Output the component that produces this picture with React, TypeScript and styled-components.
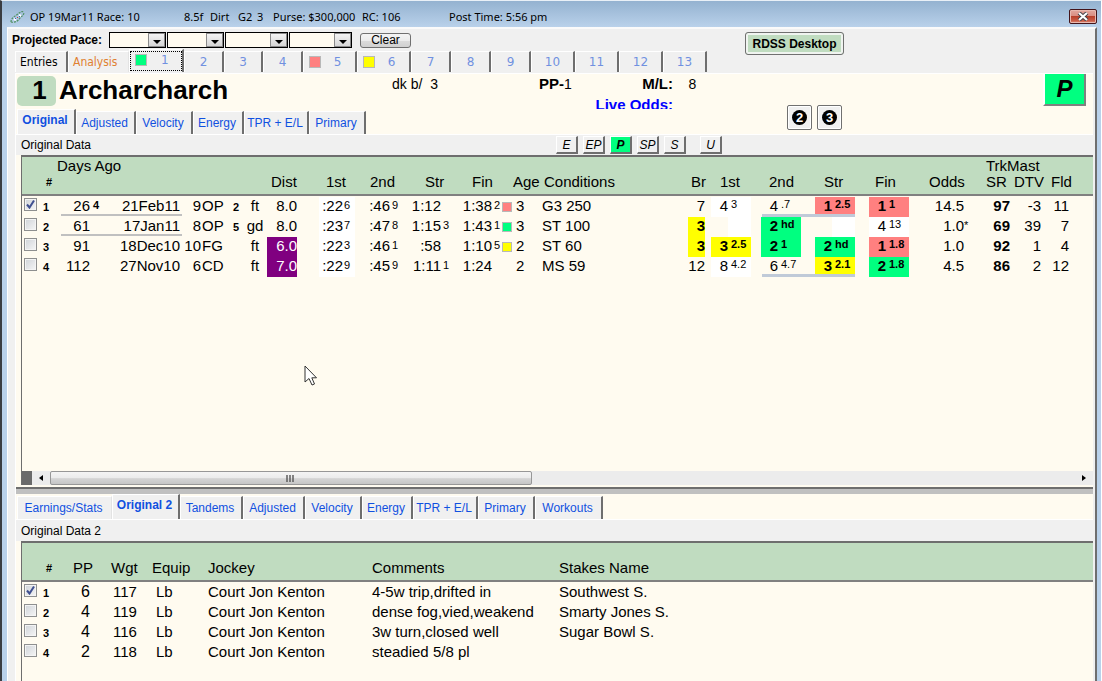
import React from 'react';
import styled, { createGlobalStyle, css } from 'styled-components';

const GREEN = '#00ff80';
const SALMON = '#ff8080';
const YELLOW = '#ffff00';
const PURPLE = '#800080';
const MINT = '#c0dcc0';
const CREAM = '#fffbf0';
const FACE = '#f0f0f0';
const SANS = '"Liberation Sans", Arial, sans-serif';

const Global = createGlobalStyle`
  *, *::before, *::after { box-sizing: border-box; }
  html, body { margin: 0; padding: 0; }
  body { font-family: ${SANS}; font-size: 12px; color: #000; background: #b9d1ea; overflow: hidden; }
  button, select, input { font: inherit; color: inherit; margin: 0; padding: 0; border-radius: 0; }
  h1, p { margin: 0; }
`;

/* ---------- window frame ---------- */

const Frame = styled.div`
  position: relative;
  display: flex;
  flex-direction: column;
  min-height: 100vh;
  background: #b9d1ea;
  border-left: 2px solid #3a3d42;
  border-right: 1px solid #fff;
  border-top: 1px solid #e9f0f7;
`;

const TitleBar = styled.header`
  display: flex;
  align-items: center;
  height: 26px;
  padding: 5px 4px 0 8px;
  background: linear-gradient(#94b2d0, #b9d1ea);
  font: 11px/16px 'Noto Sans', 'Open Sans', sans-serif;
  white-space: pre;
`;

const TitleText = styled.span<{ $w: number }>`
  width: ${(p) => p.$w}px;
  flex: none;
`;

const CloseButton = styled.button`
  display: flex;
  align-items: center;
  justify-content: center;
  width: 28px;
  height: 15px;
  margin-left: auto;
  border: 1px solid #43141a;
  border-radius: 2px;
  background: linear-gradient(#e3a89f 0, #d98d82 45%, #b9402b 50%, #c75a45 80%, #e08b76 100%);
  box-shadow: inset 0 0 0 1px #e9b9b0;
`;

const Client = styled.main`
  flex: 1;
  display: flex;
  flex-direction: column;
  margin: 0 4px 0 5px;
  padding-left: 7px;
  border-top: 2px solid #fafafa;
  border-left: 1px solid #fff;
  border-right: 2px solid #6e6e6e;
  background: ${FACE};
`;

/* ---------- toolbar and race tabs ---------- */

const TopBar = styled.div`
  display: grid;
  grid-template-columns: 730px 1fr;
  height: 44px;
`;

const PaceRow = styled.div`
  display: flex;
  align-items: center;
  height: 20px;
  padding-top: 2px;
  gap: 1px;
`;

const PaceLabel = styled.span`
  width: 96px;
  margin-left: -3px;
  font-weight: bold;
  white-space: nowrap;
`;

const SelectBox = styled.span<{ $w: number }>`
  display: flex;
  width: ${(p) => p.$w}px;
  height: 16px;
  border: 1px solid #000;
  background: ${CREAM};
`;

const Select = styled.select`
  flex: 1;
  min-width: 0;
  border: 0;
  appearance: none;
  background: ${CREAM};
`;

const Arrow = styled.span`
  display: flex;
  align-items: flex-end;
  justify-content: center;
  width: 17px;
  padding-bottom: 2px;
  border: 1px solid #8a8a8a;
  background: linear-gradient(#f4f4f4, #d6d6d6);
`;

const ClearButton = styled.button`
  width: 51px;
  height: 15px;
  margin-left: 7px;
  border: 1px solid #707070;
  border-radius: 3px;
  background: linear-gradient(#f4f4f4 0, #ececec 50%, #dcdcdc 50%, #d0d0d0 100%);
  line-height: 13px;
`;

const DesktopButton = styled.button`
  justify-self: start;
  width: 99px;
  height: 23px;
  margin-top: 3px;
  border: 1px solid #707070;
  border-radius: 3px;
  background: ${MINT};
  box-shadow: inset 0 0 0 2px #f0f4f0;
  font-weight: bold;
`;

const RaceTabs = styled.div`
  display: flex;
  align-items: flex-end;
  height: 24px;
  padding: 0 0 1px 0;
`;

const tabBase = css`
  flex: none;
  border: 0;
  border-top: 1px solid #fff;
  border-left: 1px solid #fff;
  background: ${FACE};
  white-space: nowrap;
`;

const RaceTab = styled.button<{ $w: number; $active?: boolean; $edge?: boolean; $marked?: boolean; $color: string }>`
  ${tabBase}
  display: flex;
  align-items: center;
  justify-content: center;
  gap: 13px;
  width: ${(p) => p.$w}px;
  height: ${(p) => (p.$active ? 23 : 21)}px;
  padding-right: ${(p) => (p.$marked ? 9 : 0)}px;
  border-right: ${(p) => (p.$edge === false ? '1px solid #e3e3e3' : '2px solid #6e6e6e')};
  color: ${(p) => p.$color};
  font: 12px/16px 'DejaVu Sans', Verdana, sans-serif;
`;

const WordTab = styled(RaceTab)`
  justify-content: flex-start;
  padding-left: 4px;
  font: 12px/16px 'DejaVu Sans Condensed', 'DejaVu Sans', sans-serif;
`;

const FocusRing = styled.span`
  display: flex;
  align-items: center;
  gap: 14px;
  width: 52px;
  height: 20px;
  padding: 0 0 3px 4px;
  border: 1px dotted #000;
`;

const Swatch = styled.span<{ $color: string; $size: number }>`
  flex: none;
  width: ${(p) => p.$size}px;
  height: ${(p) => p.$size}px;
  border: 1px solid #b8b8b8;
  background: ${(p) => p.$color};
`;

/* ---------- horse header ---------- */

const Sheet = styled.section`
  flex: 1;
  display: flex;
  flex-direction: column;
  margin-right: 2px;
  border-top: 1px solid #fff;
  border-left: 1px solid #fff;
  background: ${CREAM};
`;

const HorseArea = styled.div`
  display: grid;
  grid-template-columns: 771px 1fr auto;
`;

const HorseLine = styled.div`
  display: flex;
  height: 35px;
  padding: 2px 0 0 1px;
  overflow: hidden;
`;

const PostBadge = styled.span`
  width: 39px;
  height: 30px;
  border-radius: 5px;
  background: ${MINT};
  font: bold 26px/28px ${SANS};
  text-align: center;
  padding-left: 6px;
`;

const HorseName = styled.h1`
  width: 336px;
  padding-left: 3px;
  font: bold 26px/28px ${SANS};
`;

const Facts = styled.div`
  display: grid;
  grid-template-columns: 147px 60px 74px 24px;
  grid-auto-rows: 20px;
  font-size: 14px;
  line-height: 16px;
  white-space: pre;
`;

const FactLabel = styled.span`
  font-weight: bold;
  font-size: 15px;
`;

const RightLabel = styled(FactLabel)`
  text-align: right;
`;

const LiveOdds = styled(RightLabel)`
  grid-column: 2 / 4;
  color: #0000ff;
  line-height: 18px;
`;

const RoundButtons = styled.div`
  display: flex;
  gap: 5px;
  padding-top: 31px;
`;

const RoundButton = styled.button`
  display: flex;
  align-items: center;
  justify-content: center;
  width: 25px;
  height: 25px;
  border: 1px solid #707070;
  border-radius: 2px;
  background: ${FACE};
  box-shadow: inset 0 0 0 1px #fff;
`;

const RunStyle = styled.button`
  width: 43px;
  height: 32px;
  margin-right: 7px;
  border: 0;
  border-left: 2px solid #fff;
  border-right: 2px solid #808080;
  border-bottom: 2px solid #808080;
  background: ${GREEN};
  font: italic bold 24px/28px ${SANS};
`;

/* ---------- section tabs ---------- */

const SectionTabs = styled.div`
  display: flex;
  align-items: flex-end;
  height: 25px;
  padding-left: 1px;
`;

const SectionTab = styled.button<{ $w: number; $active?: boolean; $edge?: boolean }>`
  ${tabBase}
  width: ${(p) => p.$w}px;
  height: ${(p) => (p.$active ? 25 : 23)}px;
  padding: 0 2px ${(p) => (p.$active ? 4 : 1)}px 0;
  border-right: ${(p) => (p.$edge === false ? '1px solid #e3e3e3' : '2px solid #6e6e6e')};
  color: #1050e0;
  font-weight: ${(p) => (p.$active ? 'bold' : 'normal')};
`;

const Caption = styled.div<{ $h: number }>`
  display: flex;
  align-items: center;
  height: ${(p) => p.$h}px;
  padding-left: 5px;
  border-top: 1px solid #fff;
  background: ${FACE};
`;

const CaptionText = styled.span`
  width: 535px;
`;

const StyleButton = styled.button<{ $on?: boolean; $apart?: boolean }>`
  width: 22px;
  height: 18px;
  margin-right: ${(p) => (p.$apart ? 14 : 5)}px;
  border: 1px solid #fff;
  border-right: 2px solid #6e6e6e;
  border-bottom: 2px solid #6e6e6e;
  background: ${(p) => (p.$on ? GREEN : FACE)};
  font-style: italic;
  font-weight: ${(p) => (p.$on ? 'bold' : 'normal')};
  line-height: 14px;
`;

/* ---------- grids ---------- */

const Panel = styled.div<{ $min: number }>`
  flex: ${(p) => (p.$min ? 'none' : 1)};
  min-height: ${(p) => p.$min}px;
  margin-left: 5px;
  border-top: 2px solid #6e6e6e;
  border-left: 1px solid #6e6e6e;
  overflow: hidden;
`;

const Table = styled.table`
  width: 100%;
  table-layout: fixed;
  border-collapse: separate;
  border-spacing: 0;
  font-size: 15px;
  line-height: 18px;
  white-space: nowrap;

  tbody::before {
    content: '';
    display: block;
    height: 1px;
  }
`;

const HeadRow = styled.tr`
  background: ${MINT};
`;

const Th = styled.th<{ $x?: number; $top?: boolean }>`
  height: 39px;
  padding: 1px 0 4px ${(p) => p.$x ?? 0}px;
  border-bottom: 2px solid #808080;
  font-weight: normal;
  line-height: 16px;
  text-align: left;
  vertical-align: ${(p) => (p.$top ? 'top' : 'bottom')};
`;

const SmallTh = styled(Th)`
  font-size: 11px;
  font-weight: bold;
`;

const Td = styled.td<{ $x?: number; $r?: number; $bold?: boolean; $bg?: string; $color?: string; $center?: boolean; $right?: boolean }>`
  height: 20px;
  padding: 0 ${(p) => p.$r ?? 0}px 0 ${(p) => p.$x ?? 0}px;
  text-align: ${(p) => (p.$right ? 'right' : p.$center ? 'center' : 'left')};
  vertical-align: top;
  font-weight: ${(p) => (p.$bold ? 'bold' : 'normal')};
  background: ${(p) => p.$bg ?? 'none'};
  color: ${(p) => p.$color ?? 'inherit'};
`;

const IndexTd = styled(Td)`
  font-size: 11px;
  font-weight: bold;
  line-height: 20px;
`;

const PostTd = styled(Td)`
  font-size: 16px;
`;

const Check = styled.input`
  display: block;
  appearance: none;
  width: 13px;
  height: 13px;
  margin: 1px 0 0 2px;
  border: 1px solid #8e8f8f;
  background: linear-gradient(135deg, #cfd3d8, #f6f6f6);
  box-shadow: inset 0 0 0 1px #f4f4f4;

  &:checked {
    background: url("data:image/svg+xml,%3Csvg xmlns='http://www.w3.org/2000/svg' viewBox='0 0 11 11'%3E%3Cpath d='M2 5.5 L4.5 8.5 L9 1.5' fill='none' stroke='%23405090' stroke-width='2'/%3E%3C/svg%3E") center / 11px 11px no-repeat, linear-gradient(135deg, #cfd3d8, #f6f6f6);
  }
`;

const Pair = styled.div<{ $w: number; $bg?: string }>`
  display: flex;
  justify-content: flex-end;
  width: ${(p) => p.$w}px;
  height: 20px;
  margin-left: auto;
  background: ${(p) => p.$bg ?? 'none'};
`;

const Sup = styled.span<{ $w: number; $gap?: number; $bold?: boolean }>`
  flex: none;
  width: ${(p) => p.$w}px;
  padding-left: ${(p) => p.$gap ?? 0}px;
  font-size: 11px;
  line-height: 17px;
  text-align: left;
  font-weight: ${(p) => (p.$bold ? 'bold' : 'inherit')};
`;

const Call = styled.div<{ $bg?: string; $bold?: boolean; $short?: boolean }>`
  display: flex;
  gap: 3px;
  width: 40px;
  height: ${(p) => (p.$short ? 17 : 20)}px;
  margin-left: auto;
  background: ${(p) => p.$bg ?? 'none'};
  font-weight: ${(p) => (p.$bold ? 'bold' : 'normal')};
`;

const CallPos = styled.span`
  width: 17px;
  text-align: right;
`;

const CallLen = styled.span`
  font-size: 11px;
  line-height: 15px;
`;

const FinSwatch = styled.span`
  display: flex;
  align-items: center;
  width: 10px;
  height: 20px;
`;

/* ---------- scroll bar ---------- */

const ScrollRow = styled.div`
  display: flex;
  height: 14px;
  margin: 0 0 2px 5px;
  border-left: 1px solid #6e6e6e;
  background: #ececec;
`;

const ScrollBlock = styled.span`
  width: 10px;
  background: #6a6a6a;
`;

const ScrollArrow = styled.button`
  display: flex;
  align-items: center;
  justify-content: center;
  width: 18px;
  border: 0;
  background: none;
`;

const Thumb = styled.span`
  display: flex;
  align-items: center;
  justify-content: center;
  width: 45%;
  border: 1px solid #979797;
  border-radius: 2px;
  background: linear-gradient(#f4f4f4 0, #ebebeb 50%, #d4d4d4 55%, #c6c6c6 100%);
`;

const ScrollRest = styled.span`
  flex: 1;
`;

const Splitter = styled.div`
  height: 7px;
  border-top: 2px solid #6e6e6e;
  background: #c0c0c0;
`;

const Pointer = styled.svg`
  position: absolute;
  left: 302px;
  top: 364px;
`;

/* ---------- data ---------- */

const BLUE = '#7090e0';

const raceTabs: [string, number, string?][] = [
  ['2', 40], ['3', 39], ['4', 40], ['5', 54, SALMON], ['6', 54, YELLOW], ['7', 40],
  ['8', 40], ['9', 40], ['10', 44], ['11', 44], ['12', 44], ['13', 44],
];

const upperTabs: [string, number][] = [
  ['Original', 59], ['Adjusted', 60], ['Velocity', 57], ['Energy', 51], ['TPR + E/L', 65], ['Primary', 57],
];

const lowerTabs: [string, number][] = [
  ['Earnings/Stats', 95], ['Original 2', 68], ['Tandems', 63], ['Adjusted', 62], ['Velocity', 57],
  ['Energy', 51], ['TPR + E/L', 65], ['Primary', 57], ['Workouts', 68],
];

type CallData = { p?: string; l?: string; c?: string };
type Row = {
  days: string; daysSup?: string; date: string; race: string; track: string; post?: string; cond: string;
  dist: string; purple?: boolean; t: [string, string][]; mark?: string; age: string; conditions: string;
  br: string; brHot?: boolean; calls: CallData[]; odds: string; star?: boolean; sr: string; dtv: string; fld: string;
};

const rows: Row[] = [
  {
    days: '26', daysSup: '4', date: '21Feb11', race: '9', track: 'OP', post: '2', cond: 'ft', dist: '8.0',
    t: [[':22', '6'], [':46', '9'], ['1:12', ''], ['1:38', '2']], mark: SALMON, age: '3', conditions: 'G3 250', br: '7',
    calls: [{ p: '4', l: '3', c: '#fff' }, { p: '4', l: '.7' }, { p: '1', l: '2.5', c: SALMON }, { p: '1', l: '1', c: SALMON }],
    odds: '14.5', sr: '97', dtv: '-3', fld: '11',
  },
  {
    days: '61', date: '17Jan11', race: '8', track: 'OP', post: '5', cond: 'gd', dist: '8.0',
    t: [[':23', '7'], [':47', '8'], ['1:15', '3'], ['1:43', '1']], mark: GREEN, age: '3', conditions: 'ST 100', br: '3', brHot: true,
    calls: [{ c: 'half' }, { p: '2', l: 'hd', c: GREEN }, { c: 'half' }, { p: '4', l: '13', c: '#fff' }],
    odds: '1.0', star: true, sr: '69', dtv: '39', fld: '7',
  },
  {
    days: '91', date: '18Dec10', race: '10', track: 'FG', cond: 'ft', dist: '6.0', purple: true,
    t: [[':22', '3'], [':46', '1'], [':58', ''], ['1:10', '5']], mark: YELLOW, age: '2', conditions: 'ST 60', br: '3', brHot: true,
    calls: [{ p: '3', l: '2.5', c: YELLOW }, { p: '2', l: '1', c: GREEN }, { p: '2', l: 'hd', c: GREEN }, { p: '1', l: '1.8', c: SALMON }],
    odds: '1.0', sr: '92', dtv: '1', fld: '4',
  },
  {
    days: '112', date: '27Nov10', race: '6', track: 'CD', cond: 'ft', dist: '7.0', purple: true,
    t: [[':22', '9'], [':45', '9'], ['1:11', '1'], ['1:24', '']], age: '2', conditions: 'MS 59', br: '12',
    calls: [{ p: '8', l: '4.2', c: '#fff' }, { p: '6', l: '4.7' }, { p: '3', l: '2.1', c: YELLOW }, { p: '2', l: '1.8', c: GREEN }],
    odds: '4.5', sr: '86', dtv: '2', fld: '12',
  },
];

const upperCols = [19, 16, 45, 80, 20, 30, 11, 24, 30, 58, 47, 48, 62, 30, 146, 17, 46, 50, 54, 54, 66, 35, 31, 28];
const lowerCols = [19, 16, 48, 45, 55, 164, 187];

const trips = [
  ['6', '117', 'Lb', 'Court Jon Kenton', '4-5w trip,drifted in', 'Southwest S.'],
  ['4', '119', 'Lb', 'Court Jon Kenton', 'dense fog,vied,weakend', 'Smarty Jones S.'],
  ['4', '116', 'Lb', 'Court Jon Kenton', '3w turn,closed well', 'Sugar Bowl S.'],
  ['2', '118', 'Lb', 'Court Jon Kenton', 'steadied 5/8 pl', ''],
];

const strip = (color: string, w: string, y: string, h: string) =>
  `linear-gradient(${color}, ${color}) right ${y} / ${w} ${h} no-repeat`;

const isColored = (c?: string) => !!c && c !== '#fff' && c !== 'half';

function Cols({ widths }: { widths: number[] }) {
  return (
    <colgroup>
      {widths.map((w, i) => <col key={i} width={w} />)}
      <col />
    </colgroup>
  );
}

function CallCell({ call, bar }: { call: CallData; bar?: string }) {
  const half = call.c === 'half';
  const bg = bar ? strip('#c0cad8', bar, 'bottom', '3px') : half ? strip('#fff', '23px', 'top', '20px') : undefined;
  return (
    <Td $bg={bg}>
      <Call $bg={half ? undefined : call.c} $bold={isColored(call.c)} $short={!!bar}>
        <CallPos>{call.p}</CallPos>
        <CallLen>{call.l}</CallLen>
      </Call>
    </Td>
  );
}

function UpperTable() {
  return (
    <Table aria-label="Original Data">
      <Cols widths={upperCols} />
      <thead>
        <HeadRow>
          <Th />
          <SmallTh $x={5}>#</SmallTh>
          <Th colSpan={2} $top>Days Ago</Th>
          <Th /><Th /><Th /><Th />
          <Th $x={4}>Dist</Th>
          <Th $x={29}>1st</Th>
          <Th $x={15}>2nd</Th>
          <Th $x={23}>Str</Th>
          <Th $x={22}>Fin</Th>
          <Th $x={1}>Age</Th>
          <Th $x={2}>Conditions</Th>
          <Th $x={3}>Br</Th>
          <Th $x={15}>1st</Th>
          <Th $x={18}>2nd</Th>
          <Th $x={23}>Str</Th>
          <Th $x={20}>Fin</Th>
          <Th $x={20}>Odds</Th>
          <Th $x={11}>TrkMast<br />SR</Th>
          <Th $x={4}>DTV</Th>
          <Th $x={10}>Fld</Th>
          <Th />
        </HeadRow>
      </thead>
      <tbody>
        {rows.map((r, i) => {
          const ruled = i < 2;
          const barred = i === 0 || i === 3;
          return (
            <tr key={i}>
              <Td><Check type="checkbox" defaultChecked={i === 0} aria-label={`Select race ${i + 1}`} /></Td>
              <IndexTd $x={2}>{i + 1}</IndexTd>
              <Td $bg={ruled ? strip('#c0c0c0', '41px', '17px', '2px') : undefined}>
                <Pair $w={45}>{r.days}<Sup $w={12} $gap={3} $bold>{r.daysSup}</Sup></Pair>
              </Td>
              <Td $right $r={2} $bg={ruled ? strip('#c0c0c0', '100%', '17px', '2px') : undefined}>{r.date}</Td>
              <Td $right $r={1}>{r.race}</Td>
              <Td>{r.track}</Td>
              <Td $x={1}><Sup $w={8} $bold>{r.post}</Sup></Td>
              <Td $center>{r.cond}</Td>
              <Td $right $bg={r.purple ? PURPLE : undefined} $color={r.purple ? '#fff' : undefined}>{r.dist}</Td>
              <Td><Pair $w={36} $bg="#fff">{r.t[0][0]}<Sup $w={12} $gap={1}>{r.t[0][1]}</Sup></Pair></Td>
              <Td><Pair $w={47}>{r.t[1][0]}<Sup $w={12} $gap={2}>{r.t[1][1]}</Sup></Pair></Td>
              <Td><Pair $w={48}>{r.t[2][0]}<Sup $w={9} $gap={2}>{r.t[2][1]}</Sup></Pair></Td>
              <Td>
                <Pair $w={62}>
                  {r.t[3][0]}<Sup $w={10} $gap={2}>{r.t[3][1]}</Sup>
                  <FinSwatch>{r.mark && <Swatch $color={r.mark} $size={10} />}</FinSwatch>
                </Pair>
              </Td>
              <Td $x={4}>{r.age}</Td>
              <Td>{r.conditions}</Td>
              <Td $right $bold={r.brHot} $bg={r.brHot ? YELLOW : undefined}>{r.br}</Td>
              <CallCell call={r.calls[0]} />
              <CallCell call={r.calls[1]} bar={barred ? '39px' : undefined} />
              <CallCell call={r.calls[2]} bar={barred ? '100%' : undefined} />
              <CallCell call={r.calls[3]} />
              <Td><Pair $w={66}>{r.odds}<Sup $w={11}>{r.star ? '*' : ''}</Sup></Pair></Td>
              <Td $right $bold>{r.sr}</Td>
              <Td $right>{r.dtv}</Td>
              <Td $right>{r.fld}</Td>
              <Td />
            </tr>
          );
        })}
      </tbody>
    </Table>
  );
}

function LowerTable() {
  return (
    <Table aria-label="Original Data 2">
      <Cols widths={lowerCols} />
      <thead>
        <HeadRow>
          <Th />
          <SmallTh $x={5}>#</SmallTh>
          <Th $x={16}>PP</Th>
          <Th $x={6}>Wgt</Th>
          <Th $x={2}>Equip</Th>
          <Th $x={3}>Jockey</Th>
          <Th $x={3}>Comments</Th>
          <Th $x={3}>Stakes Name</Th>
        </HeadRow>
      </thead>
      <tbody>
        {trips.map((t, i) => (
          <tr key={i}>
            <Td><Check type="checkbox" defaultChecked={i === 0} aria-label={`Select trip ${i + 1}`} /></Td>
            <IndexTd $x={2}>{i + 1}</IndexTd>
            <PostTd $x={24}>{t[0]}</PostTd>
            <Td $x={8}>{t[1]}</Td>
            <Td $x={6}>{t[2]}</Td>
            <Td $x={3}>{t[3]}</Td>
            <Td $x={3}>{t[4]}</Td>
            <Td $x={3}>{t[5]}</Td>
          </tr>
        ))}
      </tbody>
    </Table>
  );
}

function Disc({ n }: { n: string }) {
  return (
    <svg width="17" height="17" viewBox="0 0 17 17" aria-hidden="true">
      <circle cx="8.5" cy="8.5" r="7.5" fill="#000" />
      <text x="8.5" y="13" textAnchor="middle" fill="#fff" fontFamily="Liberation Sans" fontWeight="bold" fontSize="13">{n}</text>
    </svg>
  );
}

export default function App() {
  return (
    <>
      <Global />
      <Frame>
        <TitleBar>
          <svg width="20" height="14" viewBox="0 0 20 14" aria-hidden="true">
            <g fill="none" stroke="#4f9060" strokeWidth="1.2">
              <path d="M1 12 C1 8 5 6 8 4 C10 2 12 1 14 2" strokeDasharray="2 1" />
              <path d="M1 12 C5 13 8 11 10 8 C12 6 14 5 14 2" strokeDasharray="2 1" />
            </g>
            <path d="M4 9 L6 10 M9 5 L11 6" stroke="#fff" strokeWidth="2" />
            <path d="M5 8 L6 9 M9 6 L10 7" stroke="#3b62b8" strokeWidth="1" />
            <path d="M7 7 L8 8" stroke="#c04040" strokeWidth="1" />
          </svg>
          <TitleText $w={154}>OP 19Mar11 Race: 10</TitleText>
          <TitleText $w={26}>8.5f</TitleText>
          <TitleText $w={28}>Dirt</TitleText>
          <TitleText $w={19}>G2</TitleText>
          <TitleText $w={16}>3</TitleText>
          <TitleText $w={89}>Purse: $300,000</TitleText>
          <TitleText $w={87}>RC: 106</TitleText>
          <TitleText $w={120}>Post Time: 5:56 pm</TitleText>
          <CloseButton aria-label="Close">
            <svg width="12" height="9" viewBox="0 0 12 9" aria-hidden="true">
              <path d="M2 1 L10 8 M10 1 L2 8" stroke="#404048" strokeWidth="4" />
              <path d="M2 1 L10 8 M10 1 L2 8" stroke="#fff" strokeWidth="2.2" />
            </svg>
          </CloseButton>
        </TitleBar>
        <Client>
          <TopBar>
            <div>
              <PaceRow>
                <PaceLabel>Projected Pace:</PaceLabel>
                {[57, 57, 63, 63].map((w, i) => (
                  <SelectBox key={i} $w={w}>
                    <Select aria-label={`Projected pace ${i + 1}`}><option /></Select>
                    <Arrow>
                      <svg width="8" height="4" viewBox="0 0 8 4" aria-hidden="true"><path d="M0 0 H8 L4 4 Z" /></svg>
                    </Arrow>
                  </SelectBox>
                ))}
                <ClearButton>Clear</ClearButton>
              </PaceRow>
              <RaceTabs role="tablist">
                <WordTab role="tab" $w={53} $color="#000">Entries</WordTab>
                <WordTab role="tab" $w={61} $edge={false} $color="#e08030">Analysis</WordTab>
                <RaceTab role="tab" aria-selected $w={55} $active $color={BLUE}>
                  <FocusRing><Swatch $color={GREEN} $size={12} />1</FocusRing>
                </RaceTab>
                {raceTabs.map(([n, w, c]) => (
                  <RaceTab role="tab" key={n} $w={w} $marked={!!c} $color={BLUE}>
                    {c && <Swatch $color={c} $size={12} />}{n}
                  </RaceTab>
                ))}
              </RaceTabs>
            </div>
            <DesktopButton>RDSS Desktop</DesktopButton>
          </TopBar>
          <Sheet>
            <HorseArea>
              <div>
                <HorseLine>
                  <PostBadge>1</PostBadge>
                  <HorseName>Archarcharch</HorseName>
                  <Facts>
                    <span>dk b/  3</span>
                    <span><FactLabel>PP-</FactLabel>1</span>
                    <RightLabel>M/L:</RightLabel>
                    <span>{'    8'}</span>
                    <LiveOdds>Live Odds:</LiveOdds>
                  </Facts>
                </HorseLine>
                <SectionTabs role="tablist">
                  {upperTabs.map(([n, w], i) => (
                    <SectionTab role="tab" key={n} $w={w} $active={i === 0} aria-selected={i === 0}>{n}</SectionTab>
                  ))}
                </SectionTabs>
              </div>
              <RoundButtons>
                <RoundButton aria-label="Horse 2"><Disc n="2" /></RoundButton>
                <RoundButton aria-label="Horse 3"><Disc n="3" /></RoundButton>
              </RoundButtons>
              <RunStyle>P</RunStyle>
            </HorseArea>
            <Caption $h={21}>
              <CaptionText>Original Data</CaptionText>
              <StyleButton>E</StyleButton>
              <StyleButton>EP</StyleButton>
              <StyleButton $on>P</StyleButton>
              <StyleButton>SP</StyleButton>
              <StyleButton $apart>S</StyleButton>
              <StyleButton>U</StyleButton>
            </Caption>
            <Panel $min={316}><UpperTable /></Panel>
            <ScrollRow>
              <ScrollBlock />
              <ScrollArrow aria-label="Scroll left">
                <svg width="4" height="6" viewBox="0 0 4 6" aria-hidden="true"><path d="M4 0 V6 L0 3 Z" /></svg>
              </ScrollArrow>
              <Thumb>
                <svg width="9" height="7" viewBox="0 0 9 7" aria-hidden="true">
                  <path d="M1 0 V7 M4 0 V7 M7 0 V7" stroke="#555" strokeWidth="1.4" />
                </svg>
              </Thumb>
              <ScrollRest />
              <ScrollArrow aria-label="Scroll right">
                <svg width="4" height="6" viewBox="0 0 4 6" aria-hidden="true"><path d="M0 0 V6 L4 3 Z" /></svg>
              </ScrollArrow>
            </ScrollRow>
            <Splitter />
            <SectionTabs role="tablist">
              {lowerTabs.map(([n, w], i) => (
                <SectionTab role="tab" key={n} $w={w} $active={i === 1} $edge={i !== 0} aria-selected={i === 1}>{n}</SectionTab>
              ))}
            </SectionTabs>
            <Caption $h={22}><CaptionText>Original Data 2</CaptionText></Caption>
            <Panel $min={0}><LowerTable /></Panel>
          </Sheet>
        </Client>
        <Pointer width="14" height="21" viewBox="0 0 14 21" aria-hidden="true">
          <path d="M1 1 V17 L5 13.5 L8 20 L10.500 19 L7.800 12.800 H12.500 Z" fill="#fff" stroke="#333" strokeWidth="1" />
        </Pointer>
      </Frame>
    </>
  );
}
